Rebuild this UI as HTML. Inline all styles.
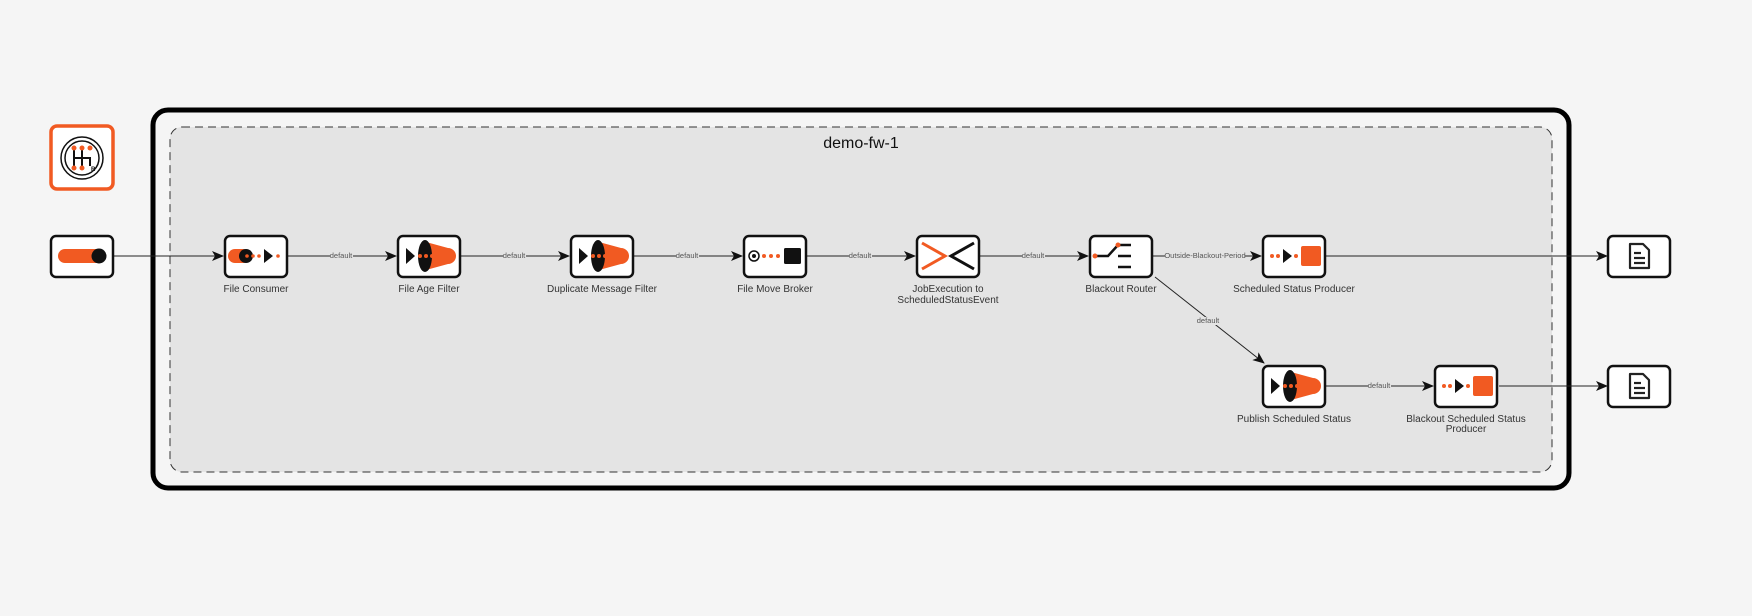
<!DOCTYPE html>
<html><head><meta charset="utf-8"><style>
html,body{margin:0;padding:0;background:#f5f5f5;}
svg{display:block;font-family:"Liberation Sans",Arial,sans-serif;}
.lbl{font-size:10px;fill:#333;text-anchor:middle;}
.el{font-size:7.5px;fill:#555;text-anchor:middle;}
.n{fill:#fff;stroke:#111;stroke-width:2.5;}
.e{stroke:#222;stroke-width:1;fill:none;}
</style></head><body>
<svg width="1752" height="616" viewBox="0 0 1752 616">
<defs>
<marker id="a" markerWidth="12" markerHeight="10" refX="11" refY="5" orient="auto" markerUnits="userSpaceOnUse"><path d="M0,0 L12,5 L0,10 L3,5 Z" fill="#111"/></marker>
<g id="dots"><circle cx="0" cy="0" r="2" fill="#f15a22"/><circle cx="6" cy="0" r="2" fill="#f15a22"/><circle cx="12" cy="0" r="2" fill="#f15a22"/></g>
<g id="filt"><path d="M-26,-8 L-17,0 L-26,8 Z" fill="#111"/><path d="M-6,-14 L16,-8 A8,8 0 0 1 16,8 L-6,14 Z" fill="#f15a22"/><ellipse cx="-7" cy="0" rx="7" ry="16" fill="#111"/><use href="#dots" x="-12"/></g>
<g id="prod"><circle cx="-22" cy="0" r="2" fill="#f15a22"/><circle cx="-16" cy="0" r="2" fill="#f15a22"/><path d="M-11,-7 L-2,0 L-11,7 Z" fill="#111"/><circle cx="2" cy="0" r="2" fill="#f15a22"/><rect x="7" y="-10" width="20" height="20" rx="2" fill="#f15a22"/></g>
<g id="doc"><path d="M-9,-12 L4,-12 L10,-6 L10,12 L-9,12 Z" fill="none" stroke="#222" stroke-width="2.2" stroke-linejoin="round"/><line x1="-5" y1="-3" x2="2" y2="-3" stroke="#222" stroke-width="2.2"/><line x1="-5" y1="2" x2="6" y2="2" stroke="#222" stroke-width="2.2"/><line x1="-5" y1="7" x2="6" y2="7" stroke="#222" stroke-width="2.2"/></g>
</defs>

<rect x="153" y="110" width="1416" height="378" rx="15" fill="#f5f5f5" stroke="#000" stroke-width="5"/>
<rect x="170" y="127" width="1382" height="345" rx="12" fill="#e4e4e4" stroke="#333" stroke-width="1" stroke-dasharray="8,5"/>
<text x="861" y="148" style="font-size:16px;fill:#111;text-anchor:middle">demo-fw-1</text>

<line class="e" x1="113" y1="256" x2="223" y2="256" marker-end="url(#a)"/>
<line class="e" x1="288" y1="256" x2="396" y2="256" marker-end="url(#a)"/>
<line class="e" x1="461" y1="256" x2="569" y2="256" marker-end="url(#a)"/>
<line class="e" x1="634" y1="256" x2="742" y2="256" marker-end="url(#a)"/>
<line class="e" x1="807" y1="256" x2="915" y2="256" marker-end="url(#a)"/>
<line class="e" x1="980" y1="256" x2="1088" y2="256" marker-end="url(#a)"/>
<line class="e" x1="1153" y1="256" x2="1261" y2="256" marker-end="url(#a)"/>
<line class="e" x1="1326" y1="256" x2="1607" y2="256" marker-end="url(#a)"/>
<line class="e" x1="1155" y1="277" x2="1264" y2="363" marker-end="url(#a)"/>
<line class="e" x1="1326" y1="386" x2="1433" y2="386" marker-end="url(#a)"/>
<line class="e" x1="1499" y1="386" x2="1607" y2="386" marker-end="url(#a)"/>
<g class="el">
<rect x="330" y="252" width="23" height="8" fill="#e4e4e4"/><text x="341" y="258">default</text>
<rect x="503" y="252" width="23" height="8" fill="#e4e4e4"/><text x="514" y="258">default</text>
<rect x="676" y="252" width="23" height="8" fill="#e4e4e4"/><text x="687" y="258">default</text>
<rect x="849" y="252" width="23" height="8" fill="#e4e4e4"/><text x="860" y="258">default</text>
<rect x="1022" y="252" width="23" height="8" fill="#e4e4e4"/><text x="1033" y="258">default</text>
<rect x="1165" y="252" width="80" height="8" fill="#e4e4e4"/><text x="1205" y="258">Outside-Blackout-Period</text>
<rect x="1197" y="317" width="23" height="8" fill="#e4e4e4"/><text x="1208" y="323">default</text>
<rect x="1368" y="382" width="23" height="8" fill="#e4e4e4"/><text x="1379" y="388">default</text>
</g>

<rect x="51" y="126" width="62" height="63" rx="6" fill="#fff" stroke="#f15a22" stroke-width="3.5"/>
<circle cx="82" cy="158" r="21" fill="none" stroke="#111" stroke-width="1.5"/>
<circle cx="82" cy="158" r="17" fill="none" stroke="#111" stroke-width="1.5"/>
<path d="M74,148 V168 M82,148 V168 M74,158 H90 V166" stroke="#111" stroke-width="2" fill="none"/>
<circle cx="74" cy="148" r="2.5" fill="#f15a22"/><circle cx="82" cy="148" r="2.5" fill="#f15a22"/><circle cx="90" cy="148" r="2.5" fill="#f15a22"/>
<circle cx="74" cy="168" r="2.5" fill="#f15a22"/><circle cx="82" cy="168" r="2.5" fill="#f15a22"/>
<text x="91" y="171" style="font-size:6px;font-weight:bold;fill:#111">R</text>

<rect class="n" x="51" y="236" width="62" height="41" rx="5"/>
<rect x="58" y="249" width="48" height="14" rx="7" fill="#f15a22"/>
<circle cx="99" cy="256" r="7.5" fill="#111"/>

<rect class="n" x="225" y="236" width="62" height="41" rx="5"/>
<rect x="228" y="249" width="22" height="14" rx="7" fill="#f15a22"/>
<circle cx="246" cy="256" r="7" fill="#111"/>
<circle cx="247" cy="256" r="1.8" fill="#f15a22"/><circle cx="253" cy="256" r="1.8" fill="#f15a22"/><circle cx="259" cy="256" r="1.8" fill="#f15a22"/>
<path d="M264,249 L273,256 L264,263 Z" fill="#111"/><circle cx="278" cy="256" r="1.8" fill="#f15a22"/>
<text class="lbl" x="256" y="292">File Consumer</text>

<rect class="n" x="398" y="236" width="62" height="41" rx="5"/><use href="#filt" x="432" y="256"/>
<text class="lbl" x="429" y="292">File Age Filter</text>
<rect class="n" x="571" y="236" width="62" height="41" rx="5"/><use href="#filt" x="605" y="256"/>
<text class="lbl" x="602" y="292">Duplicate Message Filter</text>

<rect class="n" x="744" y="236" width="62" height="41" rx="5"/>
<circle cx="754" cy="256" r="5" fill="none" stroke="#111" stroke-width="1.5"/><circle cx="754" cy="256" r="2" fill="#111"/>
<circle cx="764" cy="256" r="2" fill="#f15a22"/><circle cx="771" cy="256" r="2" fill="#f15a22"/><circle cx="778" cy="256" r="2" fill="#f15a22"/>
<rect x="784" y="248" width="17" height="16" rx="1.5" fill="#111"/>
<text class="lbl" x="775" y="292">File Move Broker</text>

<rect class="n" x="917" y="236" width="62" height="41" rx="5"/>
<path d="M922,243 L945,256 L922,269" stroke="#f15a22" stroke-width="3" fill="none"/>
<path d="M974,243 L951,256 L974,269" stroke="#111" stroke-width="3" fill="none"/>
<text class="lbl" x="948" y="292">JobExecution to</text>
<text class="lbl" x="948" y="303">ScheduledStatusEvent</text>

<rect class="n" x="1090" y="236" width="62" height="41" rx="5"/>
<path d="M1095,256 H1108 L1118,245 H1131 M1118,256 H1131 M1118,267 H1131" stroke="#111" stroke-width="2.5" fill="none"/>
<circle cx="1095" cy="256" r="2.5" fill="#f15a22"/><circle cx="1118" cy="245" r="2.5" fill="#f15a22"/>
<text class="lbl" x="1121" y="292">Blackout Router</text>

<rect class="n" x="1263" y="236" width="62" height="41" rx="5"/><use href="#prod" x="1294" y="256"/>
<text class="lbl" x="1294" y="292">Scheduled Status Producer</text>
<rect class="n" x="1263" y="366" width="62" height="41" rx="5"/><use href="#filt" x="1297" y="386"/>
<text class="lbl" x="1294" y="422">Publish Scheduled Status</text>
<rect class="n" x="1435" y="366" width="62" height="41" rx="5"/><use href="#prod" x="1466" y="386"/>
<text class="lbl" x="1466" y="422">Blackout Scheduled Status</text>
<text class="lbl" x="1466" y="432">Producer</text>

<rect class="n" x="1608" y="236" width="62" height="41" rx="5"/><use href="#doc" x="1639" y="256"/>
<rect class="n" x="1608" y="366" width="62" height="41" rx="5"/><use href="#doc" x="1639" y="386"/>
</svg>
</body></html>
